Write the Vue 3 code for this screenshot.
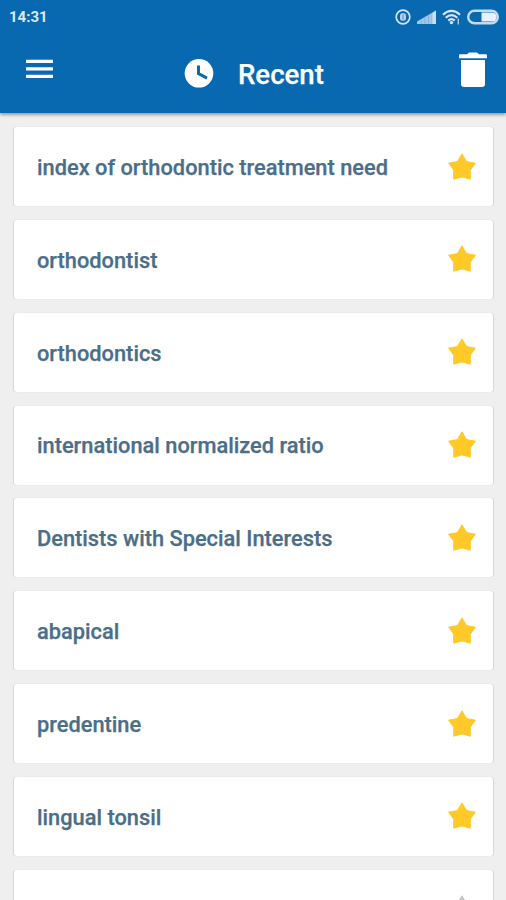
<script setup>
const terms = [
  { name: 'index of orthodontic treatment need', starred: true },
  { name: 'orthodontist', starred: true },
  { name: 'orthodontics', starred: true },
  { name: 'international normalized ratio', starred: true },
  { name: 'Dentists with Special Interests', starred: true },
  { name: 'abapical', starred: true },
  { name: 'predentine', starred: true },
  { name: 'lingual tonsil', starred: true },
  { name: '', starred: false },
]
</script>

<template>
  <div class="screen">
    <header class="header">
      <div class="status">
        <span class="time">14:31</span>
        <div class="indicators">
          <svg width="16" height="16" viewBox="0 0 16 16">
            <circle cx="8" cy="8" r="6.8" fill="none" stroke="#d3e4f5" stroke-width="1.7" />
            <rect x="5" y="4.2" width="6" height="7.6" rx="2.4" fill="#b5d1ec" />
            <path d="M8 5.5v5" stroke="#5d9acf" stroke-width="1.2" />
          </svg>
          <svg class="signal" width="20" height="14" viewBox="0 0 20 14">
            <path d="M0 14v-2.5L19 .5V14z" fill="#a3c6e6" />
            <path d="M4.2 14V9.5M7.9 14V7.3M11.5 14V5.2M15.1 14V3.2" stroke="#6fa6d5" stroke-width="0.6" />
            <path d="M15.4 14V2.9L19 .5V14z" fill="#c9def2" />
          </svg>
          <svg class="wifi" width="20" height="16" viewBox="0 0 20 16">
            <g fill="none" stroke="#d7e7f6" stroke-width="2.1">
              <path d="M1 5.7Q9.5-1.8 18 5.7" />
              <path d="M3.7 8.8Q9.5 3.6 15.3 8.8" />
              <path d="M6.3 11.6Q9.5 8.8 12.7 11.6" />
            </g>
            <circle cx="9.5" cy="13.6" r="1.7" fill="#d7e7f6" />
            <path d="M16.3 9.5v6" stroke="#a9cae8" stroke-width="1.4" />
          </svg>
          <svg class="battery" width="32" height="16" viewBox="0 0 32 16">
            <rect x="1.2" y="1.7" width="29.6" height="12.6" rx="6.3" fill="none" stroke="#c5dbf0" stroke-width="2.4" />
            <path d="M14.5 3.4H25a4.6 4.6 0 0 1 0 9.2H14.5z" fill="#e9f2fc" />
          </svg>
        </div>
      </div>
      <div class="toolbar">
        <svg class="menu" width="27" height="20" viewBox="0 0 27 20">
          <path d="M0 2.4h27M0 9.9h27M0 17.4h27" stroke="#fff" stroke-width="3.4" />
        </svg>
        <div class="heading">
          <svg width="30" height="30" viewBox="0 0 30 30">
            <circle cx="15" cy="14.3" r="14.3" fill="#fff" />
            <path d="M14.5 6.5v8.2l8.5 4.4" fill="none" stroke="#0869b1" stroke-width="3" />
          </svg>
          <h1>Recent</h1>
        </div>
        <svg class="trash" width="28" height="36" viewBox="0 0 28 36">
          <path d="M0 6.3V3.5Q0 2.2 1.3 2.2H8L10 .5h8l2 1.7h6.7Q28 2.2 28 3.5v2.8zM2 8h24v24q0 3-3 3H5q-3 0-3-3z" fill="#fff" />
        </svg>
      </div>
    </header>

    <main class="list">
      <article v-for="(term, i) in terms" :key="i" class="card">
        <span>{{ term.name }}</span>
        <svg class="star" :class="{ off: !term.starred }" width="28" height="28" viewBox="0 0 28 28">
          <path d="M14 .8 18.6 8.6 27.4 10.2 22.3 17.2 22.3 26.2 14 23.9 5.7 26.2 5.7 17.2 .6 10.2 9.4 8.6z" stroke-width="1" stroke-linejoin="round" />
        </svg>
      </article>
    </main>
  </div>
</template>

<style>
body {
  margin: 0;
  overflow: hidden;
}
</style>

<style scoped>
.screen {
  height: 900px;
  overflow: hidden;
  display: flex;
  flex-direction: column;
  background: #efefef;
  font-family: Roboto, sans-serif;
}
.header {
  flex: none;
  height: 112.5px;
  background: #0869b1;
  box-shadow: 0 2px 3px rgba(0, 0, 0, 0.35);
}
svg {
  display: block;
  flex: none;
}
.status {
  height: 34px;
  padding: 0 7px 0 9px;
  display: flex;
  align-items: center;
  justify-content: space-between;
}
.time {
  color: #dce9f7;
  font-size: 15px;
  font-weight: 700;
  line-height: 18px;
}
.indicators {
  display: flex;
  align-items: center;
}
.signal {
  margin-left: 6px;
}
.wifi {
  margin-left: 5px;
}
.battery {
  margin-left: 5px;
}
.toolbar {
  height: 78px;
  padding: 0 19px 0 26px;
  display: grid;
  grid-template-columns: 158px 1fr 28px;
  align-items: start;
}
.menu {
  margin-top: 25px;
}
.heading {
  display: flex;
  align-items: center;
  gap: 24px;
  padding-top: 22px;
}
.heading h1 {
  margin: 3px 0 0;
  color: #fff;
  font-size: 27.6px;
  font-weight: 500;
  line-height: 32px;
  -webkit-text-stroke: 0.25px #fff;
}
.trash {
  margin-top: 18px;
}
.list {
  padding: 14.5px 13px 0 14px;
  display: flex;
  flex-direction: column;
  gap: 13.85px;
}
.card {
  flex: none;
  height: 79px;
  padding: 0 17px 0 23px;
  box-sizing: border-box;
  display: flex;
  align-items: center;
  justify-content: space-between;
  background: #fff;
  border-radius: 3px;
  box-shadow: 1px 0 1px rgba(0, 0, 0, 0.1), -1px 0 1px rgba(0, 0, 0, 0.1);
  color: #4b6e88;
  font-size: 21.8px;
  font-weight: 500;
  line-height: 28px;
}
.card span {
  padding-top: 2.7px;
  -webkit-text-stroke: 0.25px #4b6e88;
}
.star {
  fill: #ffca28;
  stroke: #ffca28;
}
.off {
  fill: #c4c6c6;
  stroke: #c4c6c6;
}
</style>
